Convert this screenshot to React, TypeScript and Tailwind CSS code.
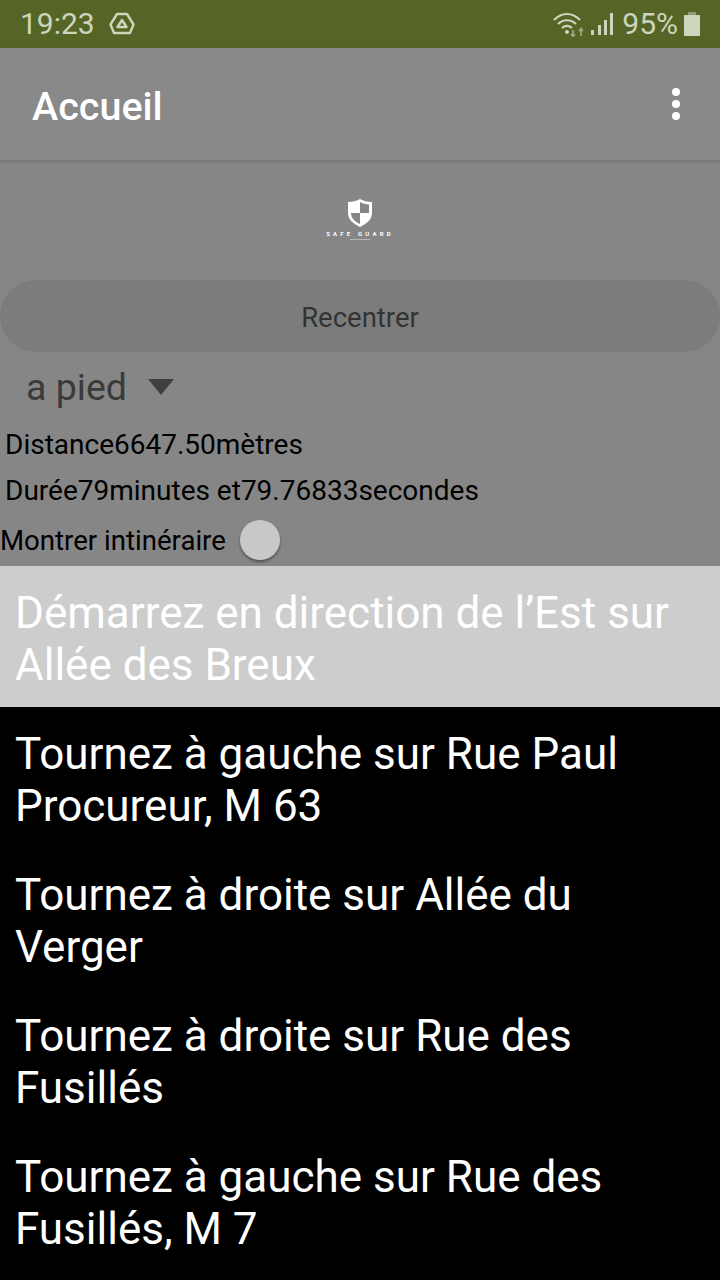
export default function App() {
  const rows = [
    ["Tournez à gauche sur Rue Paul", "Procureur, M 63"],
    ["Tournez à droite sur Allée du", "Verger"],
    ["Tournez à droite sur Rue des", "Fusillés"],
    ["Tournez à gauche sur Rue des", "Fusillés, M 7"],
  ];
  return (
    <div className="w-[720px] h-[1280px] overflow-hidden bg-black flex flex-col font-['Roboto',sans-serif]">
      <div className="h-12 shrink-0 bg-[#546526] flex items-center pl-[20px] pr-[20px] text-[#cdd5bd]">
        <span className="text-[30px] leading-none">19:23</span>
        <svg className="ml-[14px]" width="26" height="24" viewBox="0 0 26 24" fill="none" stroke="#cdd5bd" strokeWidth="2.4" strokeLinejoin="round">
          <path d="M8 2h10l6.500 10.500-3.500 8.500H5L1.500 12.500z" />
          <path d="M13 8l4.500 7h-9z" />
        </svg>
        <div className="flex-1" />
        <svg width="36" height="26" viewBox="0 0 36 26" fill="none">
          <path d="M1 9c8-8 18-8 26 0M5 13c5.500-5 12.500-5 18 0M9 17c3.500-3 6.500-3 10 0" stroke="#cdd5bd" strokeWidth="2.2" />
          <circle cx="14" cy="21" r="2" fill="#cdd5bd" />
          <path d="M20 19v6M18 23l2 2.500 2-2.500M28 25v-7M26 20l2-2.500 2 2.500" stroke="#9aa684" strokeWidth="1.800" />
        </svg>
        <svg className="ml-[1px]" width="24" height="26" viewBox="0 0 24 26" fill="#cdd5bd">
          <rect x="1" y="19" width="3" height="5" />
          <rect x="8" y="14" width="3" height="10" />
          <rect x="14" y="9" width="3" height="15" />
          <rect x="20" y="2" width="3" height="22" />
        </svg>
        <span className="ml-[8px] text-[30px] leading-none">95%</span>
        <svg className="ml-[6px]" width="16" height="26" viewBox="0 0 16 26" fill="#cdd5bd">
          <rect x="4" y="1" width="8" height="3" fill="#8f9c70" />
          <rect y="4" width="16" height="21" rx="1" />
        </svg>
      </div>
      <div className="h-[518px] shrink-0 bg-[#868686] flex flex-col">
        <div className="h-[113px] shrink-0 flex items-center justify-between pl-[32px] pr-[40px] bg-[#898989] border-b border-[#7c7c7c] shadow-sm">
          <span className="text-[39.5px] font-medium text-white leading-none pt-[5px]">Accueil</span>
          <div className="flex flex-col gap-1">
            <span className="w-2 h-2 rounded-full bg-white" />
            <span className="w-2 h-2 rounded-full bg-white" />
            <span className="w-2 h-2 rounded-full bg-white" />
          </div>
        </div>
        <div className="h-[119px] shrink-0 flex flex-col items-center pt-[37px]">
          <svg width="26" height="30" viewBox="0 0 26 30">
            <path d="M13 1c3 2 8 3 12 3v11c0 7-6 11-12 14C7 26 1 22 1 15V4c4 0 9-1 12-3z" fill="#fff" />
            <path d="M13 4c2.500 1.500 6 2.200 9 2.500V15h-9zM13 15v11c-4-2-9-5-9-11z" fill="#868686" />
          </svg>
          <span className="text-[6px] font-bold tracking-[3.2px] leading-[7px] text-white mt-[2px] whitespace-nowrap">SAFE GUARD</span>
          <span className="w-5 h-px mt-[2px] bg-white/40" />
        </div>
        <div className="h-[72px] shrink-0 rounded-[36px] bg-[#7c7c7c] flex items-center justify-center pt-[3px] text-[27.5px] text-[#333333]">Recentrer</div>
        <div className="h-[69px] shrink-0 flex items-center pl-[26px] text-[#3a3a3a]">
          <span className="text-[37.5px] leading-none pt-[3px]">a pied</span>
          <span className="ml-[21px] w-0 h-0 border-l-[13px] border-r-[13px] border-t-[16px] border-l-transparent border-r-transparent border-t-[#3f3f3f]" />
        </div>
        <div className="h-[46px] shrink-0 flex items-center pl-[5px] pt-[2px] text-[28px] text-black">Distance6647.50mètres</div>
        <div className="h-[46px] shrink-0 flex items-center pl-[5px] pt-[2px] text-[28px] text-black">Durée79minutes et79.76833secondes</div>
        <div className="h-[53px] shrink-0 flex items-center pl-0 text-[27.6px] text-black">
          <span className="pt-[3px]">Montrer intinéraire</span>
          <span className="ml-[14px] w-10 h-10 rounded-full bg-[#c8c8c8] shadow-[0_2px_3px_rgba(0,0,0,0.4)]" />
        </div>
      </div>
      <div className="h-[141px] shrink-0 bg-[#cdcdcd] flex flex-col justify-center pl-[15px] pt-[4px] text-[44px] leading-[52px] text-white">
        <div>Démarrez en direction de l’Est sur</div>
        <div>Allée des Breux</div>
      </div>
      {rows.map((r) => (
        <div key={r[0]} className="h-[141px] shrink-0 flex flex-col justify-center pl-[15px] pt-[4px] text-[44px] leading-[52px] text-white">
          <div>{r[0]}</div>
          <div>{r[1]}</div>
        </div>
      ))}
    </div>
  );
}
